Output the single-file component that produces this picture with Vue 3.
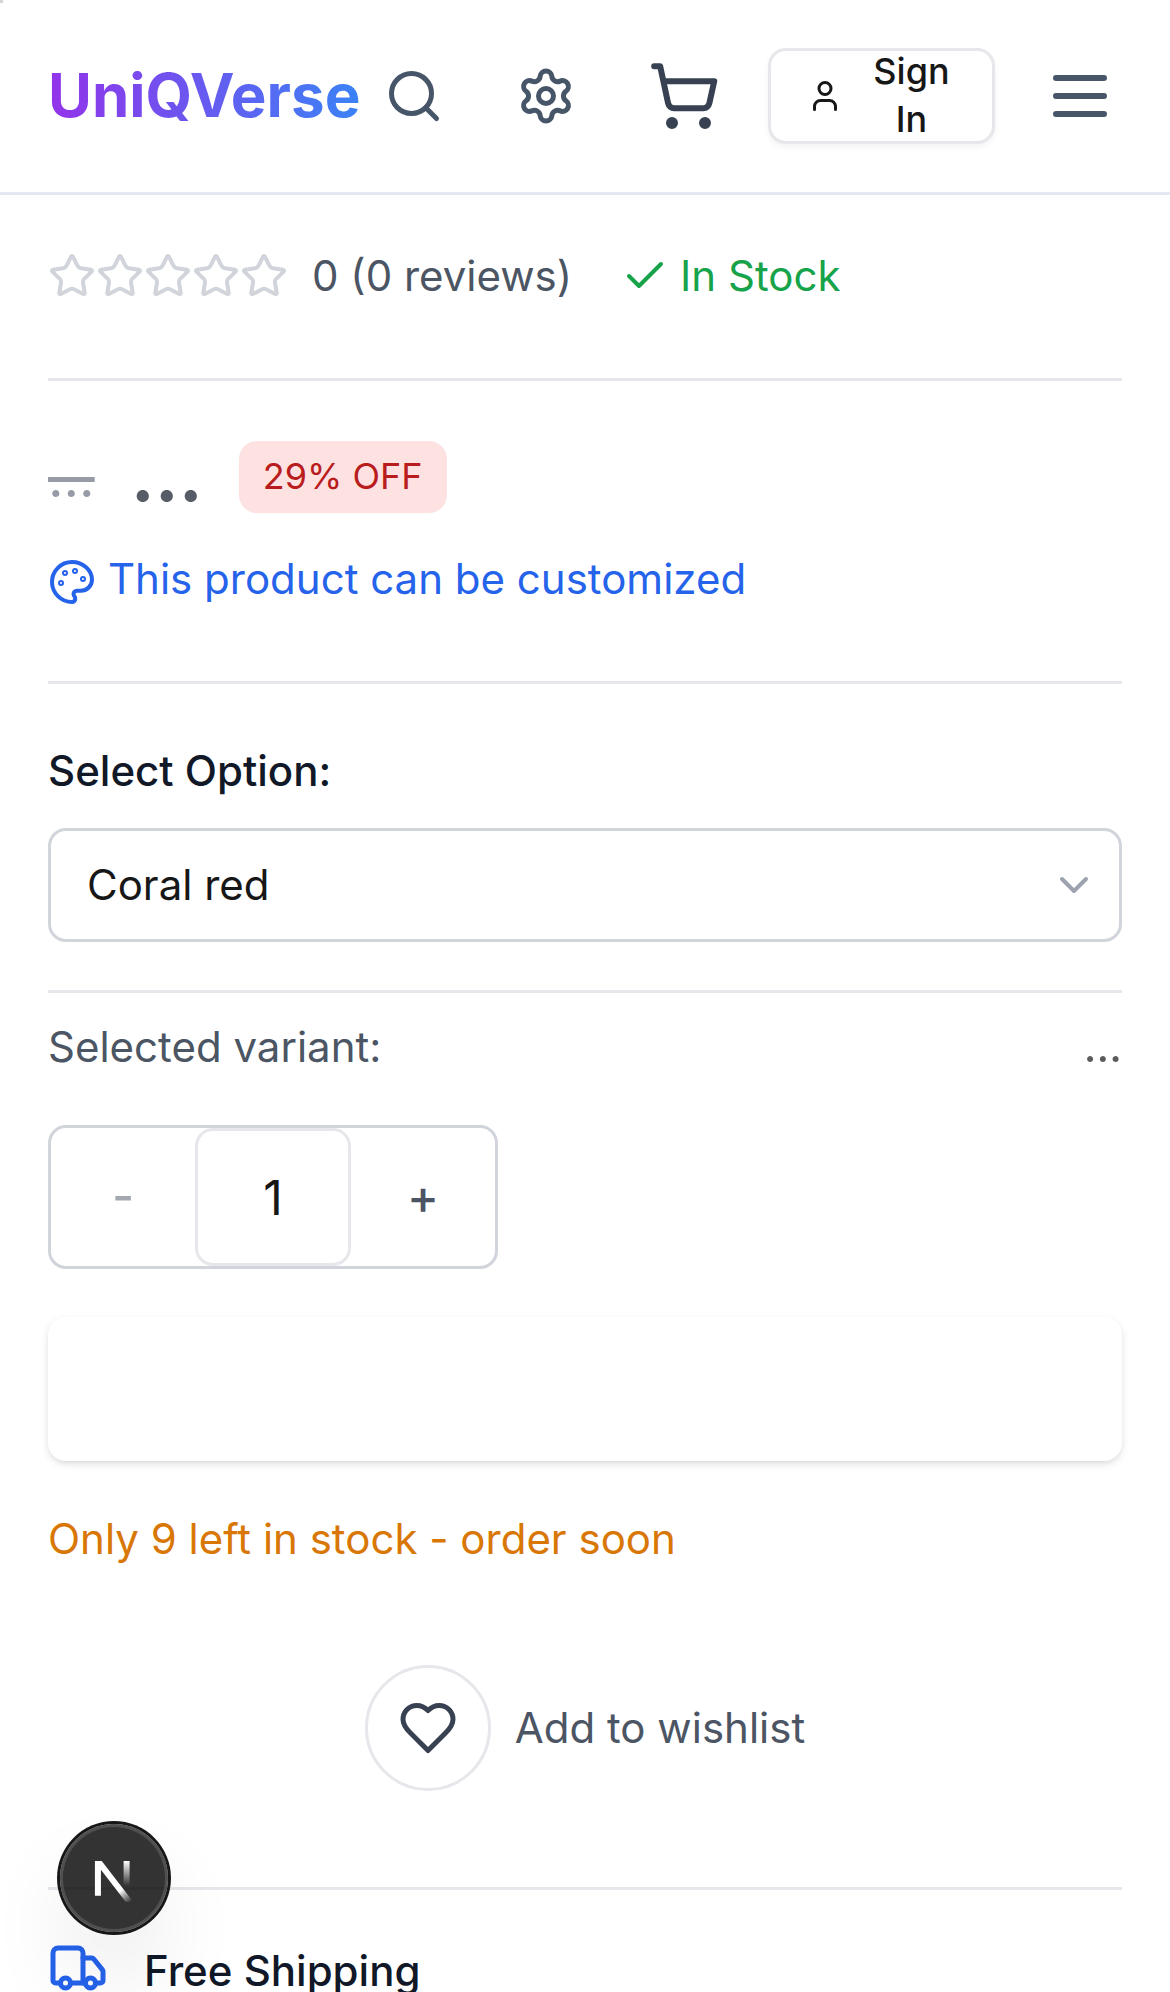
<script setup>
import { ref } from 'vue'

const quantity = ref(1)
const stars = 5
</script>

<template>
  <div class="page">
    <span class="marker"></span>
    <header class="header">
      <div class="logo"><span class="logo-text">UniQVerse</span></div>
      <nav class="actions">
        <svg class="icon i60" viewBox="0 0 24 24"><circle cx="11" cy="11" r="8" /><path d="m21 21-4.3-4.3" /></svg>
        <svg class="icon i60 settings" viewBox="0 0 24 24">
          <path d="M9.671 4.136a2.34 2.34 0 0 1 4.659 0 2.34 2.34 0 0 0 3.319 1.915 2.34 2.34 0 0 1 2.33 4.033 2.34 2.34 0 0 0 0 3.831 2.34 2.34 0 0 1-2.33 4.033 2.34 2.34 0 0 0-3.319 1.915 2.34 2.34 0 0 1-4.659 0 2.34 2.34 0 0 0-3.32-1.915 2.34 2.34 0 0 1-2.33-4.033 2.34 2.34 0 0 0 0-3.831A2.34 2.34 0 0 1 6.35 6.051a2.34 2.34 0 0 0 3.319-1.915" />
          <circle cx="12" cy="12" r="3" />
        </svg>
        <svg class="icon i72 cart" viewBox="0 0 24 24">
          <circle cx="8" cy="21" r="1" /><circle cx="19" cy="21" r="1" />
          <path d="M2.05 2.05h2l2.66 12.42a2 2 0 0 0 2 1.58h9.78a2 2 0 0 0 1.95-1.57l1.65-7.43H5.12" />
        </svg>
        <button class="sign-in">
          <svg class="icon i36" viewBox="0 0 24 24"><path d="M19 21v-2a4 4 0 0 0-4-4H9a4 4 0 0 0-4 4v2" /><circle cx="12" cy="7" r="4" /></svg>
          <span class="sign-label">Sign In</span>
        </button>
        <svg class="icon i72 menu" viewBox="0 0 24 24"><path d="M4 6h16M4 12h16M4 18h16" /></svg>
      </nav>
    </header>

    <main class="main">
      <section class="rating">
        <div class="stars">
          <svg v-for="n in stars" :key="n" class="icon i48" viewBox="0 0 24 24">
            <path d="M11.525 2.295a.53.53 0 0 1 .95 0l2.31 4.679a2.123 2.123 0 0 0 1.595 1.16l5.166.756a.53.53 0 0 1 .294.904l-3.736 3.638a2.123 2.123 0 0 0-.611 1.878l.882 5.14a.53.53 0 0 1-.771.56l-4.618-2.428a2.122 2.122 0 0 0-1.973 0L6.396 21.01a.53.53 0 0 1-.77-.56l.881-5.139a2.122 2.122 0 0 0-.611-1.879L2.16 9.795a.53.53 0 0 1 .294-.906l5.165-.755a2.122 2.122 0 0 0 1.597-1.16z" />
          </svg>
        </div>
        <span class="reviews">0 (0 reviews)</span>
        <div class="stock">
          <svg class="icon i48" viewBox="0 0 24 24"><path d="M20 6 9 17l-5-5" /></svg>
          <span>In Stock</span>
        </div>
      </section>

      <section class="pricing">
        <div class="price-row">
          <span class="old-price">...</span>
          <span class="price">...</span>
          <span class="badge">29% OFF</span>
        </div>
        <p class="custom">
          <svg class="icon i48 palette" viewBox="0 0 24 24">
            <circle cx="13.5" cy="6.5" r=".5" /><circle cx="17.5" cy="10.5" r=".5" /><circle cx="8.5" cy="7.5" r=".5" /><circle cx="6.5" cy="12.5" r=".5" />
            <path d="M12 2C6.5 2 2 6.5 2 12s4.5 10 10 10c.926 0 1.648-.746 1.648-1.688 0-.437-.18-.835-.437-1.125-.29-.289-.438-.652-.438-1.125a1.64 1.64 0 0 1 1.668-1.668h1.996c3.051 0 5.555-2.503 5.555-5.554C21.965 6.012 17.461 2 12 2z" />
          </svg>This product can be customized
        </p>
      </section>

      <section class="options">
        <span class="label">Select Option:</span>
        <div class="select">
          <span>Coral red</span>
          <svg class="icon i48" viewBox="0 0 24 24"><path d="m6 9 6 6 6-6" /></svg>
        </div>
        <div class="variant">
          <span>Selected variant:</span>
          <span class="variant-price">...</span>
        </div>
        <div class="stepper">
          <button class="step off">-</button>
          <span class="qty">{{ quantity }}</span>
          <button class="step">+</button>
        </div>
        <button class="add-cart" aria-label="Add to cart"></button>
        <p class="low">Only 9 left in stock - order soon</p>
        <div class="wishlist">
          <button class="heart" aria-label="Wishlist">
            <svg class="icon i60" viewBox="0 0 24 24"><path d="M19 14c1.49-1.46 3-3.21 3-5.5A5.5 5.5 0 0 0 16.5 3c-1.76 0-3 .5-4.5 2-1.5-1.5-2.74-2-4.5-2A5.5 5.5 0 0 0 2 8.5c0 2.3 1.5 4.05 3 5.5l7 7Z" /></svg>
          </button>
          <span>Add to wishlist</span>
        </div>
      </section>

      <section class="shipping">
        <svg class="icon i60" viewBox="0 0 24 24">
          <path d="M14 18V6a2 2 0 0 0-2-2H4a2 2 0 0 0-2 2v11a1 1 0 0 0 1 1h2" /><path d="M15 18H9" />
          <path d="M19 18h2a1 1 0 0 0 1-1v-3.65a1 1 0 0 0-.22-.624l-3.48-4.35A1 1 0 0 0 17.52 8H14" />
          <circle cx="17" cy="18" r="2" /><circle cx="7" cy="18" r="2" />
        </svg>
        <span>Free Shipping</span>
      </section>
    </main>

    <div class="dev-badge">
      <svg width="48" height="48" viewBox="-0.3 -1.33 16 16">
        <defs>
          <linearGradient id="diag" gradientUnits="userSpaceOnUse" x1="9.9" y1="10.7" x2="13" y2="14.8">
            <stop stop-color="#fff" /><stop offset="1" stop-color="#fff" stop-opacity="0" />
          </linearGradient>
          <linearGradient id="stem" gradientUnits="userSpaceOnUse" x1="11.8" y1="1" x2="11.8" y2="9.2">
            <stop stop-color="#fff" /><stop offset="1" stop-color="#fff" stop-opacity="0" />
          </linearGradient>
          <clipPath id="top"><rect x="0" y="1" width="16" height="16" /></clipPath>
        </defs>
        <g clip-path="url(#top)" fill="none" stroke-width="2">
          <path d="M13.3 15.2 2.34 1v11.6" stroke="url(#diag)" />
        </g>
        <rect x="10.9" y="1" width="2" height="11.6" fill="url(#stem)" />
      </svg>
    </div>
  </div>
</template>

<style>
body { margin: 0; background: #fff; }
</style>

<style scoped>
.page {
  position: relative;
  width: 1170px;
  height: 1992px;
  overflow: hidden;
  box-sizing: border-box;
  background: #fff;
  color: #171717;
  font: 400 42px/60px Inter, "Liberation Sans", sans-serif;
}
.page * { box-sizing: border-box; }
.marker { position: absolute; left: 0; top: 0; width: 3px; height: 3px; background: #d4d4d4; }
button { margin: 0; font-family: inherit; }
p { margin: 0; }
.icon { flex: none; display: block; fill: none; stroke: currentColor; stroke-width: 2; stroke-linecap: round; stroke-linejoin: round; }
.i36 { width: 36px; height: 36px; }
.i48 { width: 48px; height: 48px; }
.i60 { width: 60px; height: 60px; }
.i72 { width: 72px; height: 72px; }

.header { display: flex; align-items: center; height: 195px; padding-left: 48px; border-bottom: 3px solid #e2e8f0; }
.logo { flex: none; width: 336px; margin-bottom: 2px; }
.logo-text {
  display: inline-block;
  font-size: 60px;
  line-height: 84px;
  font-weight: 700;
  background: linear-gradient(to right, #9333ea, #3b82f6);
  -webkit-background-clip: text;
  background-clip: text;
  color: transparent;
}
.actions { display: flex; align-items: center; color: #475569; }
.settings { margin-left: 72px; }
.cart { margin-left: 72px; color: #374151; }
.menu { margin-left: 49px; }
.sign-in {
  display: flex;
  align-items: center;
  width: 227px;
  height: 96px;
  margin-left: 48px;
  padding: 0 36px;
  border: 3px solid #e5e7eb;
  border-radius: 18px;
  background: #fff;
  box-shadow: 0 3px 6px rgba(0, 0, 0, .05);
  color: #171717;
  font-size: 36px;
  line-height: 48px;
  font-weight: 500;
}
.sign-label { flex: 1; margin: 0 0 2px 24px; text-align: center; }

.main { padding: 51px 48px 0; }
.rating { display: flex; align-items: center; height: 135px; padding-bottom: 72px; border-bottom: 3px solid #e5e7eb; color: #4b5563; }
.stars { display: flex; color: #d1d5db; }
.reviews { margin-left: 24px; }
.stock { display: flex; align-items: center; gap: 11px; margin-left: 49px; color: #16a34a; }

.pricing { height: 303px; padding-top: 60px; border-bottom: 3px solid #e5e7eb; }
.price-row { display: flex; align-items: center; gap: 36px; height: 72px; }
.old-price { margin-top: 2px; font-size: 54px; line-height: 84px; color: #6b7280; opacity: .7; text-decoration: line-through; }
.price { margin-bottom: 5px; font-size: 72px; line-height: 96px; font-weight: 700; color: #111827; opacity: .7; }
.badge { padding: 11px 24px 13px; border-radius: 18px; background: #fee2e2; color: #b91c1c; font-size: 36px; line-height: 48px; }
.custom { margin-top: 36px; color: #2563eb; white-space: nowrap; }
.palette { display: inline-block; vertical-align: middle; margin: 0 12px 2px 0; }

.options { height: 1206px; padding-top: 57px; border-bottom: 3px solid #e5e7eb; }
.label { display: block; font-weight: 500; color: #111827; }
.select {
  display: flex;
  align-items: center;
  justify-content: space-between;
  height: 114px;
  margin: 27px 0 48px;
  padding: 0 21px 0 36px;
  border: 3px solid #d1d5db;
  border-radius: 18px;
  background: #fff;
}
.select .icon { color: #9ca3af; }
.variant { display: flex; justify-content: space-between; padding-top: 24px; border-top: 3px solid #e5e7eb; color: #4b5563; }
.variant-price { color: #171717; font-weight: 500; opacity: .7; }
.stepper { display: flex; width: 450px; height: 144px; margin-top: 48px; border: 3px solid #d1d5db; border-radius: 18px; font-size: 48px; line-height: 72px; }
.step { width: 144px; padding: 0; border: 0; background: none; color: #4b5563; font-size: 48px; line-height: 72px; font-weight: 500; }
.off { padding-bottom: 2px; opacity: .5; }
.qty { display: flex; align-items: center; justify-content: center; width: 156px; padding-top: 2px; border: 3px solid #e5e7eb; border-radius: 18px; }
.add-cart {
  display: block;
  width: 100%;
  height: 144px;
  margin-top: 48px;
  border: 0;
  border-radius: 18px;
  background: #fff;
  box-shadow: 0 3px 9px rgba(0, 0, 0, .1), 0 3px 6px -3px rgba(0, 0, 0, .1);
}
.low { margin-top: 48px; color: #d97706; }
.wishlist { display: flex; align-items: center; justify-content: center; gap: 24px; margin-top: 96px; color: #4b5563; }
.heart { display: grid; place-items: center; width: 126px; height: 126px; padding: 0 0 0 1px; border: 3px solid #e5e7eb; border-radius: 50%; background: #fff; color: #374151; }

.shipping { display: flex; gap: 36px; padding-top: 48px; color: #111827; font-weight: 500; }
.shipping .icon { color: #2563eb; }
.shipping span { margin-top: 3px; }

.dev-badge {
  position: absolute;
  left: 60px;
  bottom: 60px;
  display: grid;
  place-items: center;
  width: 108px;
  height: 108px;
  border-radius: 50%;
  background: rgba(0, 0, 0, .8);
  box-shadow: 0 0 0 3px #171717, inset 0 0 0 3px rgba(255, 255, 255, .14), 0 48px 96px -24px rgba(0, 0, 0, .24);
}
</style>
